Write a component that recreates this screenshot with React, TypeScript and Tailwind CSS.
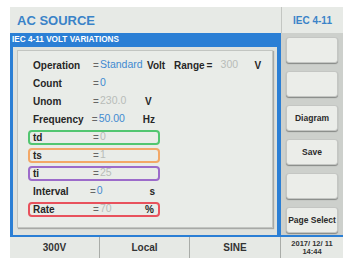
import React from "react";

type Fila = {
    etiqueta: string;
    valor: string;
    activo: boolean;
    unidad?: string;
    unidadClase?: string;
    borde?: string;
};

const filas: Fila[] = [
    { etiqueta: "Count", valor: "0", activo: true },
    { etiqueta: "Unom", valor: "230.0", activo: false, unidad: "V" },
    { etiqueta: "Frequency", valor: "50.00", activo: true, unidad: "Hz" },
    { etiqueta: "td", valor: "0", activo: false, borde: "border-[#52c670]" },
    { etiqueta: "ts", valor: "1", activo: false, borde: "border-[#f3a867]" },
    { etiqueta: "ti", valor: "25", activo: false, borde: "border-[#9c6bca]" },
    { etiqueta: "Interval", valor: "0", activo: true, unidad: "s", unidadClase: "pl-[10px]" },
    { etiqueta: "Rate", valor: "70", activo: false, unidad: "%", borde: "border-[#e8525d]" },
];

const botones = ["", "", "Diagram", "Save", "", "Page Select"];

const App = () => {
    return (
        <div className="w-[350px] h-[267px] bg-white pl-[10px] pt-[7px] font-['Liberation_Sans',_Arial,_sans-serif]">
            <div className="w-[333px] flex flex-col">
                {/* barra de titulo */}
                <div className="flex h-[26px] bg-[#e7eae6]">
                    <div className="w-[271px] flex items-center pl-[7px] pt-[1px]">
                        <span className="text-[13px] font-bold text-[#3a83c8]">AC SOURCE</span>
                    </div>
                    <div className="w-[62px] border-l border-[#c3c6c2] flex items-center justify-center">
                        <span className="text-[10px] font-bold text-[#3a83c8]">IEC 4-11</span>
                    </div>
                </div>

                <div className="flex h-[202px]">
                    {/* panel azul */}
                    <div className="w-[271px] bg-[#2b7fd5] flex flex-col pl-[3px] pr-[4px]">
                        <div className="h-[14px] flex items-center -ml-[1px]">
                            <span className="text-[8.2px] font-bold text-white leading-none">IEC 4-11 VOLT VARIATIONS</span>
                        </div>
                        <div className="flex-1 bg-[#dfe2de] pt-[3px] px-[4px] pb-[7px]">
                            <div className="h-full bg-[#e9ece8] border border-[#c2c5c1] shadow-[1px_1px_1px_rgba(0,0,0,0.25)] pl-[10px] pt-[5px]">
                                {/* Operation */}
                                <div className="h-[18px] flex items-center">
                                    <div className="h-[15px] flex items-center px-[3px] border-2 border-transparent">
                                        <span className="w-[60px] text-[10px] font-bold text-[#262626]">Operation</span>
                                        <span className="w-[7px] text-[10px] text-[#666]">=</span>
                                        <span className="w-[47px] text-[10.5px] text-[#3f8ad0]">Standard</span>
                                        <span className="w-[27px] text-[10px] font-bold text-[#262626]">Volt</span>
                                        <span className="text-[10px] font-bold text-[#262626]">Range</span>
                                        <span className="ml-[2px] w-[14px] text-[10px] font-bold text-[#262626]">=</span>
                                        <span className="w-[34px] text-[10.5px] text-[#b8bcb8]">300</span>
                                        <span className="text-[10px] font-bold text-[#262626]">V</span>
                                    </div>
                                </div>
                                {filas.map((fila, index) => (
                                    <div key={index} className="h-[18px] flex items-center">
                                        <div className={`w-[132px] h-[15px] flex items-center px-[3px] border-2 rounded-[4px] ${fila.borde ? fila.borde : "border-transparent"}`}>
                                            <span className="w-[60px] text-[10px] font-bold text-[#262626]">{fila.etiqueta}</span>
                                            <span className="w-[7px] text-[10px] text-[#666]">=</span>
                                            <span className={`w-[45px] text-[10.5px] ${fila.activo ? "text-[#3f8ad0]" : "text-[#b8bcb8]"}`}>{fila.valor}</span>
                                            {fila.unidad && (
                                                <span className={`text-[10px] font-bold text-[#262626] ${fila.unidadClase ?? ""}`}>{fila.unidad}</span>
                                            )}
                                        </div>
                                    </div>
                                ))}
                            </div>
                        </div>
                    </div>

                    {/* botones de la derecha */}
                    <div className="w-[62px] bg-[#cdd0cc] flex flex-col items-center gap-[8px] pt-[4px]">
                        {botones.map((boton, index) => (
                            <div
                                key={index}
                                className="w-[52px] h-[26px] bg-[#ebede9] rounded-[3px] border border-[#c4c6c3] shadow-[0_1px_1px_rgba(0,0,0,0.35)] flex items-center justify-center"
                            >
                                <span className="text-[8.5px] font-bold text-[#2a2a2a]">{boton}</span>
                            </div>
                        ))}
                    </div>
                </div>

                {/* barra de estado */}
                <div className="flex h-[23px] bg-[#e6e9e5] border-t-2 border-[#2b7fd5]">
                    <div className="w-[90px] flex items-center justify-center border-r border-[#a9aca8]">
                        <span className="text-[10px] font-bold text-[#333]">300V</span>
                    </div>
                    <div className="w-[90px] flex items-center justify-center border-r border-[#a9aca8]">
                        <span className="text-[10px] font-bold text-[#333]">Local</span>
                    </div>
                    <div className="w-[91px] flex items-center justify-center border-r border-[#a9aca8]">
                        <span className="text-[10px] font-bold text-[#333]">SINE</span>
                    </div>
                    <div className="w-[62px] flex flex-col items-center justify-center leading-[8px]">
                        <span className="text-[7.5px] font-bold text-[#333]">2017/ 12/ 11</span>
                        <span className="text-[7.5px] font-bold text-[#333]">14:44</span>
                    </div>
                </div>
            </div>
        </div>
    );
};

export default App;
